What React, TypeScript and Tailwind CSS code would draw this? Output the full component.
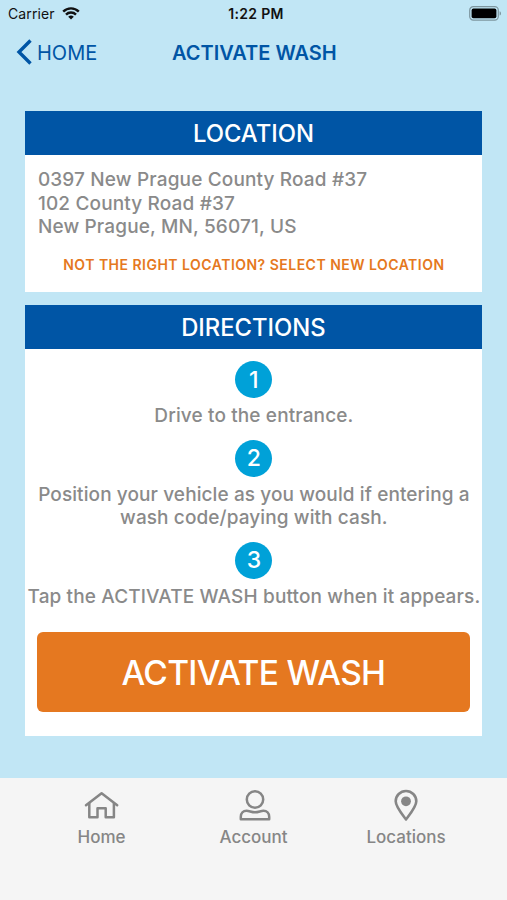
import React from 'react';
import clsx from 'clsx';

const steps = [
  { lines: ['Drive to the entrance.'], tracking: 'tracking-[0.13px]' },
  {
    lines: ['Position your vehicle as you would if entering a', 'wash code/paying with cash.'],
    tracking: 'tracking-[0.1px]',
  },
  { lines: ['Tap the ACTIVATE WASH button when it appears.'], tracking: 'tracking-[0.13px]' },
];

function WifiIcon() {
  return (
    <svg width="18" height="13" viewBox="0 0 18 13" fill="none" stroke="#111" strokeWidth="2.4">
      <path d="M1.2 4.6a11 11 0 0 1 15.6 0" />
      <path d="M4 7.6a7 7 0 0 1 10 0" />
      <path d="M9 12.4 6.2 9.8a4 4 0 0 1 5.6 0Z" fill="#111" stroke="none" />
    </svg>
  );
}

function BatteryIcon() {
  return (
    <svg width="33" height="15" viewBox="0 0 33 15">
      <rect x="0.7" y="0.7" width="28.6" height="13.4" rx="3.6" fill="none" stroke="#7d969f" strokeWidth="1.2" />
      <rect x="2.6" y="2.6" width="24.8" height="9.6" rx="1.8" fill="#000" />
      <path d="M30.6 5.2c1.9.7 1.9 3.7 0 4.4Z" fill="#7d969f" />
    </svg>
  );
}

function HomeIcon() {
  return (
    <svg width="36" height="32" viewBox="0 0 36 32" fill="none" stroke="#868686" strokeWidth="2.5" strokeLinecap="round" strokeLinejoin="round">
      <path d="M2 16.3 17.600 4.300l15.600 12" />
      <path d="M5.300 14.300v13.900h8.200v-9h8.200v9h8.200V14.300" />
    </svg>
  );
}

function AccountIcon() {
  return (
    <svg width="32" height="32" viewBox="0 0 32 32" fill="none" stroke="#868686" strokeWidth="2.5" strokeLinejoin="round">
      <circle cx="16" cy="10.500" r="8.200" />
      <path d="M1.800 30.300v-2.500c0-3.800 2.400-6 5.800-6 2.700 0 4.900 1.500 8.400 1.500s5.700-1.500 8.400-1.500c3.400 0 5.800 2.200 5.800 6v2.500Z" />
    </svg>
  );
}

function PinIcon() {
  return (
    <svg width="24" height="32" viewBox="0 0 24 32" fill="none" stroke="#868686" strokeWidth="2.6" strokeLinejoin="round">
      <path d="M12 30.500C9.500 27 1.700 18 1.700 12.300a10.300 10.300 0 0 1 20.600 0C22.300 18 14.500 27 12 30.500Z" />
      <circle cx="12" cy="12.300" r="4.900" fill="#868686" stroke="none" />
    </svg>
  );
}

function CardHeader({ title }: { title: string }) {
  return (
    <h2 className="flex h-[44px] items-center justify-center bg-[#0055a5] pt-px pr-px text-[23.8px] font-medium text-white">
      {title}
    </h2>
  );
}

export default function App() {
  return (
    <div className="flex h-[900px] w-[507px] flex-col overflow-hidden bg-[#c1e6f5] font-['Inter',sans-serif] whitespace-nowrap">
      {/* Status bar */}
      <div className="grid h-[27px] grid-cols-3 items-center pr-[5px] pl-[8px] text-[14px] text-[#111]">
        <div className="flex items-center gap-[7px]">
          <span className="tracking-[0.1px]">Carrier</span>
          <WifiIcon />
        </div>
        <span className="pl-[2px] text-center text-[14px] font-semibold tracking-[0.3px]">1:22 PM</span>
        <div className="flex justify-end">
          <BatteryIcon />
        </div>
      </div>

      {/* Nav bar */}
      <div className="grid h-[50px] grid-cols-[156px_auto] items-center justify-start pl-[16px] text-[20px] text-[#0055a5]">
        <a className="flex items-center gap-[5px]">
          <svg width="16" height="26" viewBox="0 0 16 26" fill="none" stroke="#0055a5" strokeWidth="3.4">
            <path d="M14.500 1.500 3 13l11.500 11.500" />
          </svg>
          <span className="pt-px">HOME</span>
        </a>
        <h1 className="pt-px font-semibold">ACTIVATE WASH</h1>
      </div>

      <main className="mt-[34px] ml-[25.4px] flex w-[457px] flex-1 flex-col">
        <section className="h-[181px] bg-white">
          <CardHeader title="LOCATION" />
          <address className="px-[12.5px] pt-[13px] text-[19px] leading-[23.5px] font-medium tracking-[0.15px] text-[#8a8a8a] not-italic">
            <p>0397 New Prague County Road #37</p>
            <p>102 County Road #37</p>
            <p>New Prague, MN, 56071, US</p>
          </address>
          <a className="mt-[16px] block text-center text-[14px] leading-[20px] font-semibold tracking-[0.48px] text-[#e57820]">
            NOT THE RIGHT LOCATION? SELECT NEW LOCATION
          </a>
        </section>

        <section className="mt-[13px] h-[431px] bg-white">
          <CardHeader title="DIRECTIONS" />
          {steps.map((step, i) => (
            <div key={i} className="mt-[12px] flex flex-col items-center">
              <span className="flex size-[37px] items-center justify-center rounded-full bg-[#00a1d8] pt-px text-[23px] font-medium text-white">
                {i + 1}
              </span>
              <div className={clsx('mt-[6px] text-center text-[19px] leading-[23.5px] font-medium text-[#8a8a8a]', step.tracking)}>
                {step.lines.map((line) => (
                  <p key={line}>{line}</p>
                ))}
              </div>
            </div>
          ))}
          <button className="mx-auto mt-[24px] flex h-[80px] w-[433px] items-center justify-center rounded-[6px] bg-[#e57820] pt-[2px] pr-px text-[33.5px] font-medium tracking-[-0.7px] text-white">
            ACTIVATE WASH
          </button>
        </section>
      </main>

      {/* Tab bar */}
      <nav className="grid h-[122px] grid-cols-[152px_152px_152px] justify-center bg-[#f5f5f5] pt-[11px] text-[17px] leading-[20px] font-medium text-[#868686]">
        <a className="flex flex-col items-center gap-[6px]">
          <HomeIcon />
          <span>Home</span>
        </a>
        <a className="flex flex-col items-center gap-[6px]">
          <div className="pl-[3px]">
            <AccountIcon />
          </div>
          <span>Account</span>
        </a>
        <a className="flex flex-col items-center gap-[6px]">
          <PinIcon />
          <span className="pl-px">Locations</span>
        </a>
      </nav>
    </div>
  );
}
